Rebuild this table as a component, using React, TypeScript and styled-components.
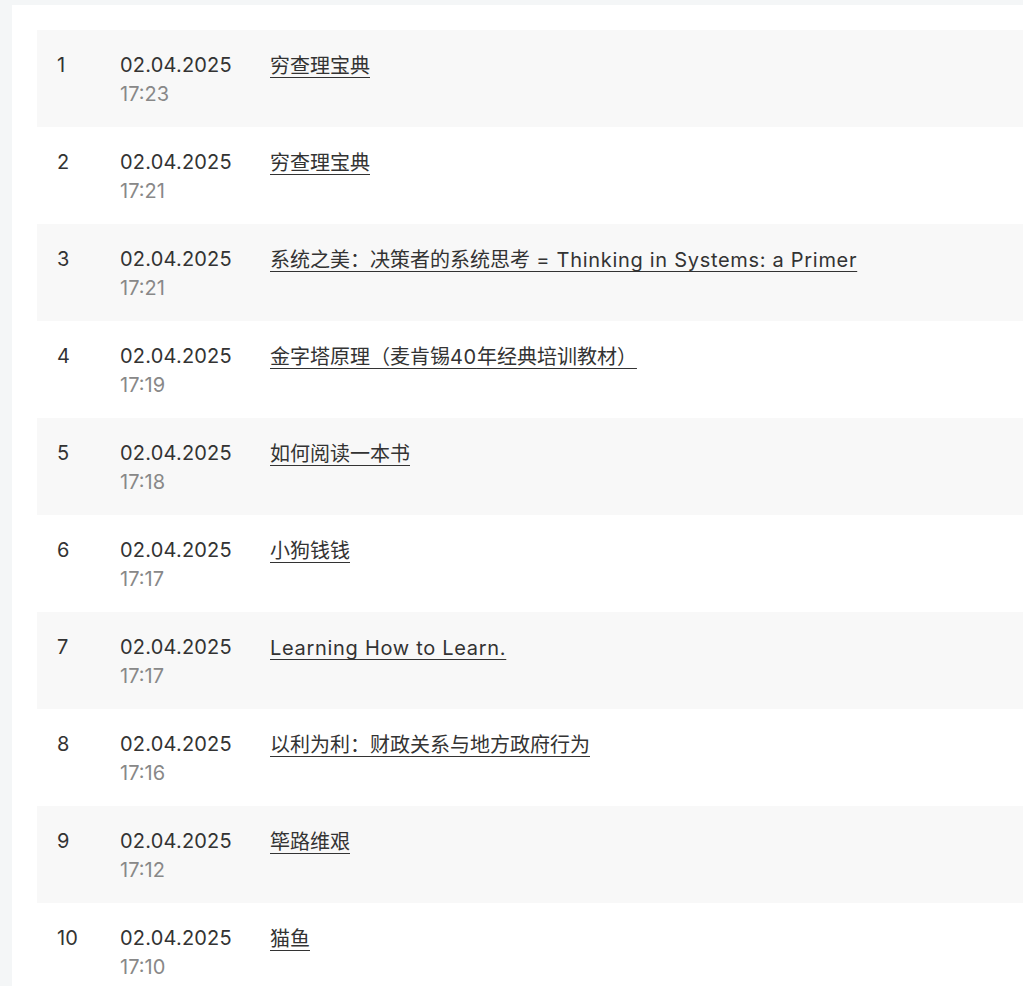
import React from "react";
import styled, { createGlobalStyle } from "styled-components";

const GlobalStyle = createGlobalStyle`
  html, body {
    margin: 0;
    padding: 0;
    background: #f4f6f7;
    overflow: hidden;
  }
  body {
    font-family: Inter, "Noto Sans CJK SC", sans-serif;
  }
`;

const Page = styled.div`
  padding: 5px 0 0 12px;
  width: 1023px;
  box-sizing: border-box;
`;

const Card = styled.div`
  background: #ffffff;
  padding: 25px 0 0 25px;
  min-height: 1000px;
`;

const Row = styled.div<{ $shaded: boolean }>`
  display: grid;
  grid-template-columns: 63px 150px 1fr;
  height: 97px;
  box-sizing: border-box;
  padding: 21px 0 0 20px;
  background: ${(p) => (p.$shaded ? "#f8f8f8" : "#ffffff")};
  font-size: 20px;
  line-height: 29px;
  color: #333333;
`;

const Num = styled.div`
  color: #333333;
`;

const DateCol = styled.div`
  display: flex;
  flex-direction: column;
`;

const DateText = styled.span`
  color: #333333;
  letter-spacing: 0.2px;
`;

const TimeText = styled.span`
  color: #888888;
`;

const TitleCell = styled.div`
  padding-top: 1px;
`;

const Title = styled.a`
  color: #333333;
  text-decoration: underline;
  text-decoration-thickness: 1px;
  text-underline-offset: 4px;
  cursor: pointer;
`;

const Latin = styled.span`
  letter-spacing: 0.7px;
`;

const rows = [
  { time: "17:23", title: "穷查理宝典" },
  { time: "17:21", title: "穷查理宝典" },
  { time: "17:21", title: "系统之美：决策者的系统思考 = Thinking in Systems: a Primer" },
  { time: "17:19", title: "金字塔原理（麦肯锡40年经典培训教材）" },
  { time: "17:18", title: "如何阅读一本书" },
  { time: "17:17", title: "小狗钱钱" },
  { time: "17:17", title: "Learning How to Learn." },
  { time: "17:16", title: "以利为利：财政关系与地方政府行为" },
  { time: "17:12", title: "筚路维艰" },
  { time: "17:10", title: "猫鱼" },
];

function splitRuns(text: string) {
  const parts = text.match(/[\u0020-\u007e]+|[^\u0020-\u007e]+/g) || [];
  return parts.map((p, i) =>
    /^[\u0020-\u007e]+$/.test(p) ? <Latin key={i}>{p}</Latin> : <React.Fragment key={i}>{p}</React.Fragment>
  );
}

export default function App() {
  return (
    <>
      <GlobalStyle />
      <Page>
        <Card>
          {rows.map((r, i) => (
            <Row key={i} $shaded={i % 2 === 0}>
              <Num>{i + 1}</Num>
              <DateCol>
                <DateText>02.04.2025</DateText>
                <TimeText>{r.time}</TimeText>
              </DateCol>
              <TitleCell>
                <Title>{splitRuns(r.title)}</Title>
              </TitleCell>
            </Row>
          ))}
        </Card>
      </Page>
    </>
  );
}
